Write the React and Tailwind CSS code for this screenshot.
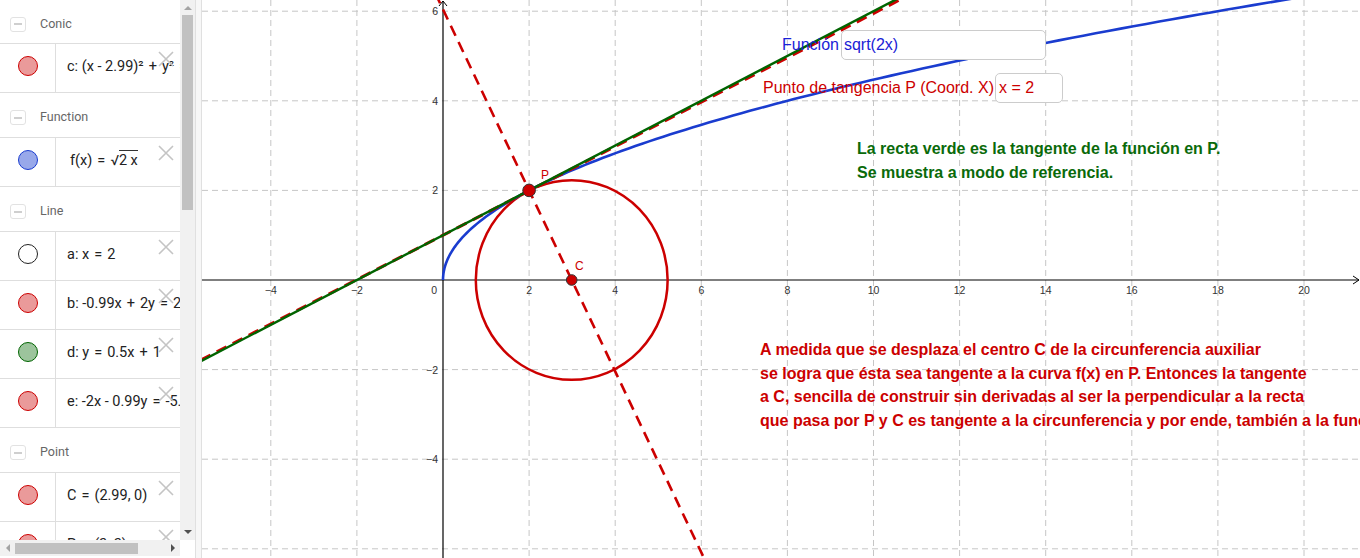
import React from 'react';

const ox = 443;
const oy = 280;
const sx = 43.05;
const sy = 44.8;
const X = (x) => ox + x * sx;
const Y = (y) => oy - y * sy;

const RED = '#cc0000';
const BLUE = '#1a3ccf';
const GREEN = '#006400';

const items = [
    { type: 'group', label: 'Conic', first: true },
    { type: 'row', fill: '#ea9a9a', stroke: '#cc0000', text: 'c: (x - 2.99)² + y² = 4.96' },
    { type: 'group', label: 'Function' },
    { type: 'row', fill: '#98a8ea', stroke: '#1a3ccf', sqrt: true },
    { type: 'group', label: 'Line' },
    { type: 'row', fill: '#ffffff', stroke: '#222222', text: 'a: x = 2' },
    { type: 'row', fill: '#ea9a9a', stroke: '#cc0000', text: 'b: -0.99x + 2y = 2' },
    { type: 'row', fill: '#9cc49c', stroke: '#006400', text: 'd: y = 0.5x + 1' },
    { type: 'row', fill: '#ea9a9a', stroke: '#cc0000', text: 'e: -2x - 0.99y = -5.98' },
    { type: 'group', label: 'Point' },
    { type: 'row', fill: '#ea9a9a', stroke: '#cc0000', text: 'C = (2.99, 0)' },
    { type: 'row', fill: '#ea9a9a', stroke: '#cc0000', text: 'P = (2, 2)' },
];

// math-style spacing round = and +
const MathText = ({ text }) =>
    text.split(/( [=+] )/).map((part, i) =>
        part === ' = ' || part === ' + ' ? (
            <span key={i} className="mx-[5px]">{part.trim()}</span>
        ) : (
            <span key={i}>{part}</span>
        )
    );

const CloseX = () => (
    <svg width="16" height="16" viewBox="0 0 16 16" className="absolute left-[158px] top-[7px]">
        <path d="M1 1 L15 15 M15 1 L1 15" stroke="#c4c4c4" strokeWidth="1.6" fill="none" />
    </svg>
);

const GroupHeader = ({ label, first }) => (
    <div className={`flex items-center pt-[5px] border-b border-[#dedede] shrink-0 ${first ? 'h-[44px]' : 'h-[45px]'}`}>
        <div className="ml-[10px] w-[16px] h-[15px] rounded-[3px] border border-[#e2e2e2] flex items-center justify-center">
            <div className="w-[8px] h-[2px] bg-[#cfcfcf]"></div>
        </div>
        <span className="ml-[14px] text-[12.5px] text-[#666666]">{label}</span>
    </div>
);

const Row = ({ fill, stroke, text, sqrt }) => (
    <div className="relative flex h-[49px] shrink-0 border-b border-[#dedede]">
        <div className="w-[56px] shrink-0 border-r border-[#dedede] flex justify-center pt-[12px]">
            <div className="w-[20px] h-[20px] rounded-full border" style={{ backgroundColor: fill, borderColor: stroke }}></div>
        </div>
        <div className="pl-[11px] pt-[12px] text-[14.5px] text-[#222222] whitespace-nowrap">
            {sqrt ? (
                <span className="pl-[3px]">
                    f(x)<span className="mx-[5px]">=</span>√<span className="border-t border-[#333333] pt-[1px]">2 x</span>
                </span>
            ) : (
                <MathText text={text} />
            )}
        </div>
        <CloseX />
    </div>
);

const AlgebraPanel = () => (
    <div className="flex flex-col w-[195px] h-[558px] shrink-0 bg-white">
        <div className="flex h-[540px]">
            <div className="w-[180px] overflow-hidden flex flex-col">
                {items.map((it, i) =>
                    it.type === 'group' ? (
                        <GroupHeader key={i} label={it.label} first={it.first} />
                    ) : (
                        <Row key={i} {...it} />
                    )
                )}
            </div>
            {/* vertical scrollbar */}
            <div className="w-[15px] bg-[#f1f1f1] flex flex-col items-center">
                <div className="h-[15px] flex items-center justify-center">
                    <div className="w-0 h-0 border-l-[4px] border-r-[4px] border-b-[4px] border-l-transparent border-r-transparent border-b-[#a3a3a3]"></div>
                </div>
                <div className="w-[11px] h-[195px] bg-[#c1c1c1]"></div>
                <div className="flex-1"></div>
                <div className="h-[16px] flex items-center justify-center">
                    <div className="w-0 h-0 border-l-[4px] border-r-[4px] border-t-[4px] border-l-transparent border-r-transparent border-t-[#505050]"></div>
                </div>
            </div>
        </div>
        {/* horizontal scrollbar */}
        <div className="flex h-[18px]">
            <div className="w-[180px] h-[16px] bg-[#f1f1f1] flex items-center">
                <div className="w-[15px] flex justify-center">
                    <div className="w-0 h-0 border-t-[4px] border-b-[4px] border-r-[4px] border-t-transparent border-b-transparent border-r-[#a3a3a3]"></div>
                </div>
                <div className="w-[123px] h-[11px] bg-[#c1c1c1]"></div>
                <div className="flex-1"></div>
                <div className="w-[15px] flex justify-center">
                    <div className="w-0 h-0 border-t-[4px] border-b-[4px] border-l-[4px] border-t-transparent border-b-transparent border-l-[#505050]"></div>
                </div>
            </div>
        </div>
    </div>
);

const GraphCanvas = () => {
    const gridX = [];
    for (let k = -4; k <= 20; k += 2) if (k !== 0) gridX.push(k);
    const gridY = [6, 4, 2, -2, -4, -6];

    const sqrtPts = [];
    for (let i = 0; i <= 120; i++) {
        const t = i / 120;
        const x = 19.8 * t * t;
        sqrtPts.push(`${X(x).toFixed(2)},${Y(Math.sqrt(2 * x)).toFixed(2)}`);
    }

    const lineB = (x) => (2 + 0.99 * x) / 2;
    const lineE = (y) => (5.98 - 0.99 * y) / 2;

    return (
        <svg width="1158" height="558" viewBox="202 0 1158 558" className="block">
            <rect x="202" y="0" width="1158" height="558" fill="#ffffff" />
            {gridX.map((k) => (
                <line key={'gx' + k} x1={X(k)} y1="0" x2={X(k)} y2="558" stroke="#c6c6c6" strokeWidth="1" strokeDasharray="6 4" />
            ))}
            {gridY.map((k) => (
                <line key={'gy' + k} x1="202" y1={Y(k)} x2="1360" y2={Y(k)} stroke="#c6c6c6" strokeWidth="1" strokeDasharray="6 4" />
            ))}

            {/* axes */}
            <line x1="202" y1={oy} x2="1359" y2={oy} stroke="#000" strokeWidth="1.2" />
            <line x1={ox} y1="1" x2={ox} y2="558" stroke="#000" strokeWidth="1.2" />
            <path d={`M${ox - 4} 6 L${ox} 1 L${ox + 4} 6`} stroke="#000" strokeWidth="1" fill="none" />
            <path d={`M1353 ${oy - 4} L1359 ${oy} L1353 ${oy + 4}`} stroke="#000" strokeWidth="1" fill="none" />

            <g fontFamily="'Liberation Sans', Arial, sans-serif" fontSize="10.5" fill="#333">
                {gridX.map((k) => (
                    <text key={'lx' + k} x={X(k)} y={oy + 14} textAnchor="middle">
                        {k < 0 ? '−' + Math.abs(k) : k}
                    </text>
                ))}
                <text x={ox - 6} y={oy + 14} textAnchor="end">0</text>
                {gridY.filter((k) => k !== -6).map((k) => (
                    <text key={'ly' + k} x={ox - 5} y={Y(k) + 4} textAnchor="end">
                        {k < 0 ? '−' + Math.abs(k) : k}
                    </text>
                ))}
            </g>

            {/* circle */}
            <ellipse cx={X(2.99)} cy={oy} rx={2.228 * sx} ry={2.228 * sy} fill="none" stroke={RED} strokeWidth="2.5" />

            {/* f(x) */}
            <polyline points={sqrtPts.join(' ')} fill="none" stroke={BLUE} strokeWidth="2.6" />

            {/* perpendicular dashed line e */}
            <line x1={X(lineE(6.4))} y1={Y(6.4)} x2={X(lineE(-6.4))} y2={Y(-6.4)} stroke={RED} strokeWidth="2.6" strokeDasharray="11 7" />

            {/* tangent b (dashed) and d (green) */}
            <line x1={X(-6)} y1={Y(lineB(-6))} x2={X(12)} y2={Y(lineB(12))} stroke={RED} strokeWidth="3" strokeDasharray="11 7" />
            <line x1={X(-6)} y1={Y(-2)} x2={X(12)} y2={Y(7)} stroke={GREEN} strokeWidth="2.4" />

            {/* points */}
            <circle cx={X(2)} cy={Y(2)} r="6.3" fill={RED} stroke="#333" strokeWidth="1" />
            <circle cx={X(2.99)} cy={oy} r="5.3" fill={RED} stroke="#333" strokeWidth="1" />
            <g fontFamily="'Liberation Sans', Arial, sans-serif" fontSize="12" fill={RED}>
                <text x="541" y="179">P</text>
                <text x="575" y="270">C</text>
            </g>
        </svg>
    );
};

export default function App() {
    return (
        <div className="flex w-[1360px] h-[558px] overflow-hidden bg-white" style={{ fontFamily: 'Roboto, "Noto Sans", sans-serif' }}>
            <AlgebraPanel />
            {/* splitter */}
            <div className="w-[7px] h-full shrink-0 bg-[#f7f7f7] border-l border-r border-[#e0e0e0]"></div>

            <div className="relative flex-1 h-full overflow-hidden" style={{ fontFamily: '"Liberation Sans", Arial, sans-serif' }}>
                <GraphCanvas />

                {/* input box: function */}
                <div className="absolute left-[580px] top-[30px] flex items-center gap-[2px]">
                    <span className="text-[16px] text-[#1a22d6]">Función</span>
                    <div className="w-[205px] h-[30px] rounded-[5px] border border-[#cccccc] bg-white flex items-center pl-[2px] text-[16px] text-[#1a22d6]">
                        sqrt(2x)
                    </div>
                </div>

                {/* input box: tangent point */}
                <div className="absolute left-[561px] top-[73px] flex items-center gap-[1px]">
                    <span className="text-[16px] text-[#cc0000]">Punto de tangencia P (Coord. X)</span>
                    <div className="w-[68px] h-[30px] rounded-[5px] border border-[#cccccc] bg-white flex items-center pl-[3px] text-[16px] text-[#cc0000]">
                        x = 2
                    </div>
                </div>

                <div className="absolute left-[655px] top-[137px] text-[16px] leading-[24px] font-bold text-[#0a6a0a] whitespace-nowrap">
                    <div>La recta verde es la tangente de la función en P.</div>
                    <div>Se muestra a modo de referencia.</div>
                </div>

                <div className="absolute left-[558px] top-[338px] text-[16px] leading-[23.5px] font-bold text-[#cc0000] whitespace-nowrap">
                    <div>A medida que se desplaza el centro C de la circunferencia auxiliar</div>
                    <div>se logra que ésta sea tangente a la curva f(x) en P. Entonces la tangente</div>
                    <div>a C, sencilla de construir sin derivadas al ser la perpendicular a la recta</div>
                    <div>que pasa por P y C es tangente a la circunferencia y por ende, también a la función.</div>
                </div>
            </div>
        </div>
    );
}
